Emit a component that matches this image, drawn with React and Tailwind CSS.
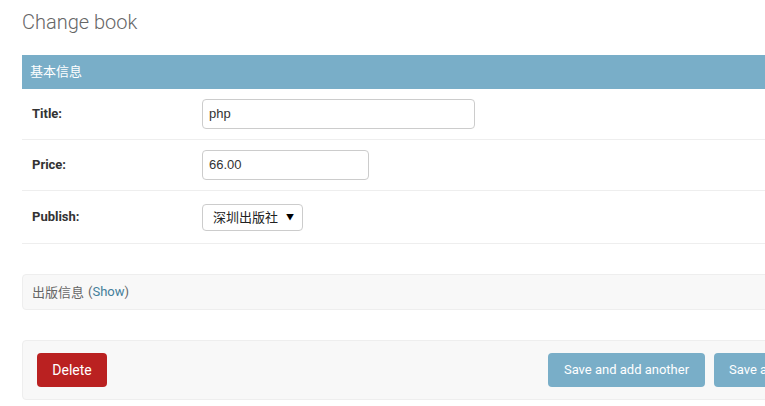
export default function App() {
  const sans = { fontFamily: 'Roboto, "Noto Sans CJK SC", sans-serif' };
  const arial = { fontFamily: 'Arial, "Liberation Sans", sans-serif' };
  return (
    <div className="w-[765px] h-[406px] overflow-hidden bg-white" style={sans}>
      <div className="w-[1000px] pl-[22px] pt-[9px]">
        <h1 className="text-[20px] font-light text-[#666] leading-[26px] m-0 mb-[20px]">Change book</h1>

        <div className="border-b border-[#eee]">
          <div className="bg-[#79aec8] text-white text-[13px] h-[34px] flex items-center px-[8px]">基本信息</div>

          <div className="flex items-center px-[10px] py-[10px] border-b border-[#eee]">
            <div className="w-[170px] text-[13px] font-bold text-[#333]">Title:</div>
            <div className="w-[273px] h-[30px] border border-[#ccc] rounded-[4px] flex items-center px-[6px] text-[13px] text-[#333]" style={arial}>php</div>
          </div>

          <div className="flex items-center px-[10px] py-[10px] border-b border-[#eee]">
            <div className="w-[170px] text-[13px] font-bold text-[#333]">Price:</div>
            <div className="w-[167px] h-[30px] border border-[#ccc] rounded-[4px] flex items-center px-[6px] text-[13px] text-[#333]" style={arial}>66.00</div>
          </div>

          <div className="flex items-center h-[52px] px-[10px]">
            <div className="w-[170px] text-[13px] font-bold text-[#333]">Publish:</div>
            <div className="w-[101px] h-[27px] border border-[#ccc] rounded-[4px] flex items-center pl-[10px] pr-[8px] text-[13px] text-[#222] justify-between" style={{ fontFamily: '"Noto Sans CJK SC", sans-serif' }}>
              <span>深圳出版社</span>
              <span className="text-[8px] text-black">▼</span>
            </div>
          </div>
        </div>

        <div className="mt-[30px] h-[36px] bg-[#f8f8f8] border border-[#eee] rounded-[4px] flex items-center px-[9px] text-[13px] text-[#666]">
          <span style={{ fontFamily: '"Noto Sans CJK SC", sans-serif' }}>出版信息</span>
          <span className="ml-[4px]">(<span className="text-[#447e9b]">Show</span>)</span>
        </div>

        <div className="mt-[30px] bg-[#f8f8f8] border border-[#eee] rounded-[4px] px-[14px] py-[12px] flex items-center">
          <div className="w-[70px] h-[34px] bg-[#ba2121] rounded-[4px] text-white text-[14px] flex items-center justify-center">Delete</div>
          <div className="ml-[441px] flex gap-[9px]">
            <div className="w-[157px] h-[34px] bg-[#79aec8] rounded-[4px] text-white text-[13px] flex items-center justify-center">Save and add another</div>
            <div className="w-[186px] h-[34px] bg-[#79aec8] rounded-[4px] text-white text-[13px] flex items-center pl-[15px]">Save and continue editing</div>
            <div className="w-[70px] h-[34px] bg-[#417690] rounded-[4px] text-white text-[13px] font-bold flex items-center justify-center">SAVE</div>
          </div>
        </div>
      </div>
    </div>
  );
}
